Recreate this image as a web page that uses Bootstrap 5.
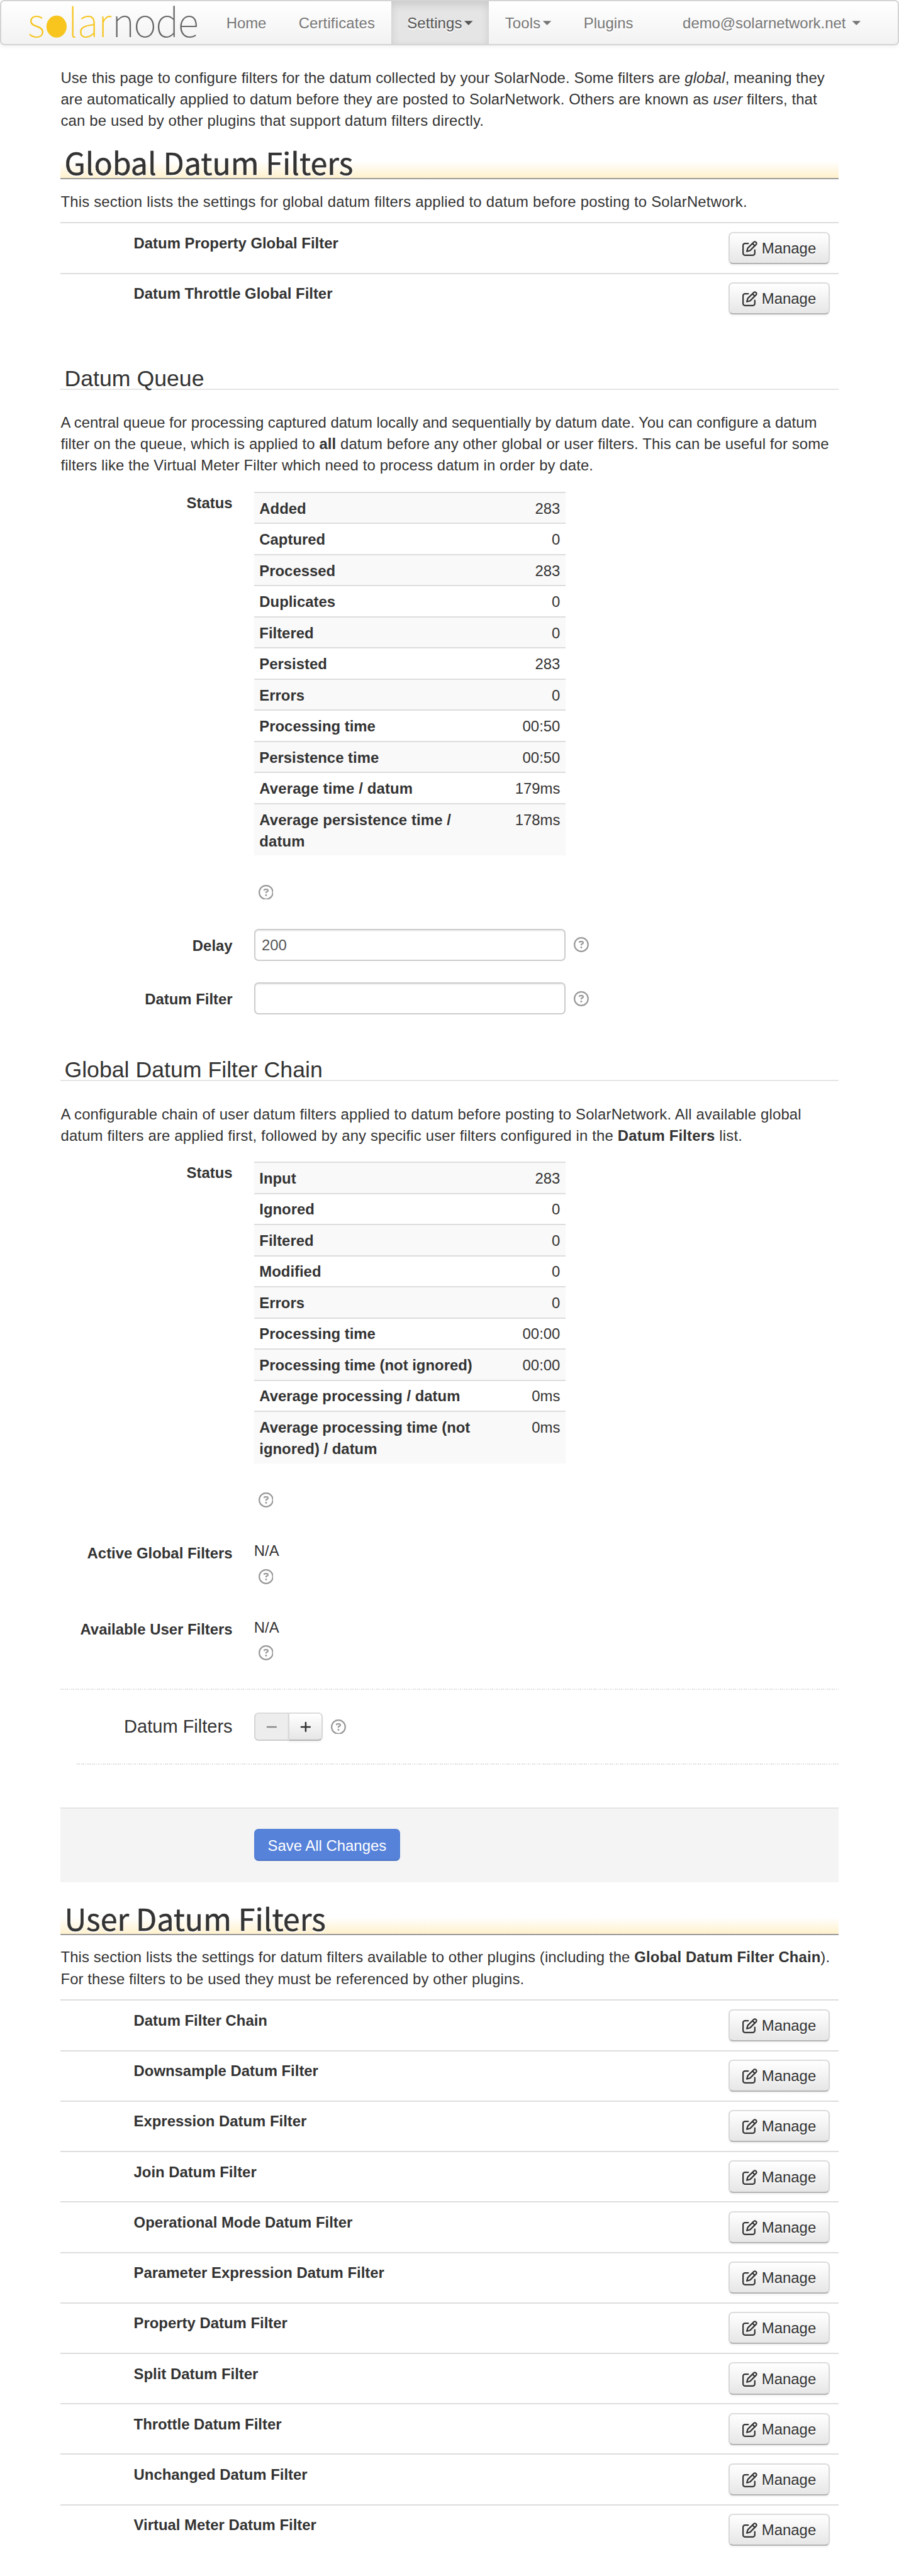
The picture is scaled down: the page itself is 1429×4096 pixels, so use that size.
<!DOCTYPE html>
<html lang="en">
<head>
<meta charset="utf-8">
<title>SolarNode - Datum Filters</title>
<link href="https://cdn.jsdelivr.net/npm/bootstrap@5.3.0/dist/css/bootstrap.min.css" rel="stylesheet">
<style>
/* 0.1rem is one layout unit */
html{font-size:17.0733px;overflow:hidden}
body{font-family:"Liberation Sans",Arial,sans-serif;font-size:1.4rem;line-height:2rem;color:#333;background:#fff;-webkit-text-size-adjust:none}
.topbar{height:4.2rem;border:2px solid #d4d4d4;border-radius:.4rem;background:linear-gradient(#fff,#f2f2f2);box-shadow:0 .1rem .4rem rgba(0,0,0,.065);padding:0}
.brand-svg{width:19.45rem;height:4rem;flex:none;display:block;overflow:visible}
.topbar .nav-link{padding:.1rem 1.5rem 0;height:100%;display:flex;align-items:center;color:#777;text-shadow:0 .1rem 0 #fff;white-space:nowrap}
.topbar .nav-link.active{color:#555;background:#e5e5e5;box-shadow:inset 0 .3rem .8rem rgba(0,0,0,.125)}
.topbar .user-link{margin-right:1.95rem}
.tri{width:.8rem;height:.4rem;background:currentColor;clip-path:polygon(0 0,100% 0,50% 100%);margin-left:.2rem;margin-top:0}
.page-body{width:72.4rem;margin:2rem auto 0}
p{margin:0 0 .92rem;padding-top:.08rem;white-space:nowrap}
.w1{letter-spacing:.09px}.w2{letter-spacing:.11px}.w3{letter-spacing:.16px}.w4{letter-spacing:.2px}
h2.sect{font-family:"Noto Sans CJK SC",sans-serif;font-weight:400;-webkit-text-stroke:.5px #333;font-size:2.83rem;line-height:3.76rem;height:3.5rem;margin:0 0 1rem;padding-left:.35rem;border-bottom:2px solid #999;background:linear-gradient(rgba(255,240,200,0) 54%,#fff1cc) no-repeat;text-shadow:0 .1rem .1rem #fff,0 0 .2rem #fff;white-space:nowrap}
h3.legend-line{font-size:2.09rem;font-weight:400;line-height:6.1rem;height:4.1rem;margin:2.1rem 0 2rem;padding:0 0 0 .35rem;border-bottom:2px solid #e5e5e5}
h3.legend-line.second{margin-top:.1rem}
.item-row{height:4.7rem;border-top:2px solid #ddd;padding:.86rem .8rem 0 6.8rem;font-weight:700}
.item-row .btn-soft{margin-top:-.08rem}
.btn-soft{height:3rem;width:9.4rem;padding:.08rem 0 0;border:2px solid;border-color:#dcdcdc #d8d8d8 #b3b3b3;border-radius:.4rem;background:linear-gradient(#fff,#e6e6e6);box-shadow:0 .1rem .2rem rgba(0,0,0,.06);font-size:1.4rem;line-height:2rem;color:#333;text-shadow:0 .1rem .1rem rgba(255,255,255,.75);gap:.4rem;display:flex;align-items:center;justify-content:center}
.ico{width:1.4rem;height:1.4rem;fill:currentColor;flex:none}
.help{color:#999;display:block}
.beside{margin-left:.78rem}
.lab{width:16rem;margin-right:2rem;padding-top:.58rem;text-align:right;font-weight:700;flex:none;white-space:nowrap}
.stat{width:29rem;margin-top:.5rem}
.stat>div{height:2.9rem;border-top:2px solid #ddd;padding:.46rem .5rem 0;display:flex;justify-content:space-between}
.stat>div:nth-child(odd){background:#f9f9f9}
.stat>div.two{height:4.9rem}
.stat b{white-space:nowrap}
.below{margin:2.7rem 0 0 .4rem}
.na{padding-top:.38rem}
.na .help{margin:.68rem 0 0 .4rem}
.inp{width:29rem;height:3rem;border:2px solid #ccc;border-radius:.4rem;box-shadow:inset 0 .1rem .1rem rgba(0,0,0,.075);padding:.1rem .6rem 0;color:#555;font-size:1.4rem;line-height:2rem}
.dot-line{height:2px;background:repeating-linear-gradient(90deg,#dedede 0 1.7073px,#fff 1.7073px 3.4147px)}
.pm{width:3.2rem;height:2.6rem;padding:0;border-radius:0 .4rem .4rem 0}
.pm.off{background:#ededed;border-color:#dcdcdc #d4d4d4 #ccc;border-right:0;border-radius:.4rem 0 0 .4rem;color:#8a8a8a;box-shadow:none}
.acts{height:7rem;border-top:2px solid #e5e5e5;background:#f4f4f4;padding:1.9rem 0 0 18rem;margin-bottom:1.4rem}
.btn-save{width:13.6rem;height:3rem;padding:.1rem 0 0;border:2px solid;border-color:#5480d6 #5480d6 #4a73c4;border-radius:.4rem;background:#5682da;color:#fff;font-size:1.4rem;line-height:1}
</style>
</head>
<body>
<svg class="d-none">
<symbol id="edit" viewBox="0 0 512 512"><path d="M441 58.9L453.1 71c9.4 9.4 9.4 24.6 0 33.9L424 134.1 377.9 88 407 58.9c9.4-9.4 24.6-9.4 33.9 0zM209.8 256.2L344 121.9 390.1 168 255.8 302.2c-2.9 2.9-6.5 5-10.4 6.1l-58.5 16.7 16.7-58.5c1.1-3.9 3.2-7.5 6.1-10.4zM373.1 25L175.8 222.2c-8.7 8.7-15 19.4-18.3 31.1l-28.6 100c-2.4 8.4-.1 17.4 6.1 23.6s15.2 8.5 23.6 6.1l100-28.6c11.8-3.4 22.5-9.7 31.1-18.3L487 138.9c28.1-28.1 28.1-73.7 0-101.8L474.9 25C446.8-3.1 401.2-3.1 373.1 25zM88 64C39.4 64 0 103.4 0 152V424c0 48.6 39.4 88 88 88H360c48.6 0 88-39.4 88-88V312c0-13.3-10.7-24-24-24s-24 10.7-24 24V424c0 22.1-17.9 40-40 40H88c-22.1 0-40-17.9-40-40V152c0-22.1 17.9-40 40-40H200c13.3 0 24-10.7 24-24s-10.7-24-24-24H88z"/></symbol>
<symbol id="ask" viewBox="0 0 512 512"><path d="M464 256A208 208 0 1 0 48 256a208 208 0 1 0 416 0zM0 256a256 256 0 1 1 512 0A256 256 0 1 1 0 256zm169.8-90.7c7.9-22.3 29.1-37.3 52.8-37.3h58.3c34.9 0 63.1 28.3 63.1 63.1c0 22.6-12.1 43.5-31.7 54.8L280 264.4c-.2 13-10.9 23.6-24 23.6c-13.3 0-24-10.7-24-24V250.5c0-8.6 4.6-16.5 12.1-20.8l44.3-25.4c4.7-2.7 7.6-7.7 7.6-13.1c0-8.4-6.8-15.1-15.1-15.1H222.6c-3.4 0-6.4 2.1-7.5 5.3l-.4 1.2c-4.4 12.5-18.2 19-30.6 14.6s-19-18.2-14.6-30.6l.4-1.2zM224 352a32 32 0 1 1 64 0 32 32 0 1 1 -64 0z"/></symbol>
</svg>

<nav class="topbar d-flex">
  <svg class="brand-svg" viewBox="1.17 1.17 194.5 40" font-family="'Noto Sans CJK SC'" font-weight="100" font-size="36.5">
    <ellipse cx="52.65" cy="24.75" rx="9.4" ry="10.25" fill="#f7c51e"/>
    <text y="34.3" x="25.7 63.2 72.1 91.4" fill="#f7c51e">slar</text>
    <text y="34.3" x="104.3 124.3 144.9 165.6" fill="#666">node</text>
  </svg>
  <div class="nav flex-nowrap h-100 flex-grow-1">
    <a class="nav-link" href="#">Home</a>
    <a class="nav-link w3" href="#">Certificates</a>
    <a class="nav-link w2 active" href="#">Settings<i class="tri"></i></a>
    <a class="nav-link w3" href="#">Tools<i class="tri"></i></a>
    <a class="nav-link w1" href="#">Plugins</a>
    <a class="nav-link user-link ms-auto" href="#">demo@solarnetwork.net&nbsp;<i class="tri"></i></a>
  </div>
</nav>

<main class="page-body">
  <p><span class="w2">Use this page to configure filters for the datum collected by your SolarNode. Some filters are <em>global</em>, meaning they</span><br><span class="w2">are automatically applied to datum before they are posted to SolarNetwork. Others are known as <em>user</em> filters, that</span><br><span class="w3">can be used by other plugins that support datum filters directly.</span></p>
  <h2 class="sect">Global Datum Filters</h2>
  <p class="w4">This section lists the settings for global datum filters applied to datum before posting to SolarNetwork.</p>
  <div class="item-row d-flex justify-content-between">Datum Property Global Filter<a class="btn btn-soft"><svg class="ico"><use href="#edit"/></svg>Manage</a></div>
  <div class="item-row d-flex justify-content-between">Datum Throttle Global Filter<a class="btn btn-soft"><svg class="ico"><use href="#edit"/></svg>Manage</a></div>

  <h3 class="legend-line">Datum Queue</h3>
  <p><span>A central queue for processing captured datum locally and sequentially by datum date. You can configure a datum</span><br><span class="w2">filter on the queue, which is applied to <b>all</b> datum before any other global or user filters. This can be useful for some</span><br><span class="w2">filters like the Virtual Meter Filter which need to process datum in order by date.</span></p>
  <div class="d-flex" style="height:41.2rem">
    <div class="lab">Status</div>
    <div>
      <div class="stat">
        <div><b>Added</b><span>283</span></div>
        <div><b>Captured</b><span>0</span></div>
        <div><b>Processed</b><span>283</span></div>
        <div><b>Duplicates</b><span>0</span></div>
        <div><b>Filtered</b><span>0</span></div>
        <div><b>Persisted</b><span>283</span></div>
        <div><b>Errors</b><span>0</span></div>
        <div><b>Processing time</b><span>00:50</span></div>
        <div><b>Persistence time</b><span>00:50</span></div>
        <div><b class="w3">Average time / datum</b><span>179ms</span></div>
        <div class="two"><b class="w2">Average persistence time /<br>datum</b><span>178ms</span></div>
      </div>
      <svg class="ico help below"><use href="#ask"/></svg>
    </div>
  </div>
  <div class="d-flex" style="height:5rem">
    <label class="lab">Delay</label>
    <input class="inp" value="200"><svg class="ico help beside" style="margin-top:.8rem"><use href="#ask"/></svg>
  </div>
  <div class="d-flex" style="height:5rem">
    <label class="lab">Datum Filter</label>
    <input class="inp" value=""><svg class="ico help beside" style="margin-top:.8rem"><use href="#ask"/></svg>
  </div>

  <h3 class="legend-line second">Global Datum Filter Chain</h3>
  <p class="w3">A configurable chain of user datum filters applied to datum before posting to SolarNetwork. All available global<br>datum filters are applied first, followed by any specific user filters configured in the <b>Datum Filters</b> list.</p>
  <div class="d-flex" style="height:35.4rem">
    <div class="lab">Status</div>
    <div>
      <div class="stat">
        <div><b>Input</b><span>283</span></div>
        <div><b>Ignored</b><span>0</span></div>
        <div><b>Filtered</b><span>0</span></div>
        <div><b>Modified</b><span>0</span></div>
        <div><b>Errors</b><span>0</span></div>
        <div><b>Processing time</b><span>00:00</span></div>
        <div><b>Processing time (not ignored)</b><span>00:00</span></div>
        <div><b>Average processing / datum</b><span>0ms</span></div>
        <div class="two"><b>Average processing time (not<br>ignored) / datum</b><span>0ms</span></div>
      </div>
      <svg class="ico help below"><use href="#ask"/></svg>
    </div>
  </div>
  <div class="d-flex" style="height:7.1rem">
    <div class="lab">Active Global Filters</div>
    <div class="na">N/A<svg class="ico help"><use href="#ask"/></svg></div>
  </div>
  <div class="d-flex" style="height:7.1rem">
    <div class="lab">Available User Filters</div>
    <div class="na">N/A<svg class="ico help"><use href="#ask"/></svg></div>
  </div>
  <div class="dot-line"></div>
  <div class="d-flex align-items-center" style="height:6.8rem">
    <div class="lab fw-normal pt-0" style="font-size:1.7rem">Datum Filters</div>
    <div class="d-flex">
      <a class="btn btn-soft pm off"><svg class="ico" viewBox="0 0 14 14" fill="none" stroke="currentColor" stroke-width="1.5" stroke-linecap="round"><path d="M2.9 7h8.1"/></svg></a>
      <a class="btn btn-soft pm"><svg class="ico" viewBox="0 0 14 14" fill="none" stroke="currentColor" stroke-width="1.5" stroke-linecap="round"><path d="M2.9 7h8.1M7 2.9v8.1"/></svg></a>
    </div>
    <svg class="ico help beside"><use href="#ask"/></svg>
  </div>
  <div class="dot-line" style="margin:0 0 4rem 1.5rem"></div>

  <div class="acts"><button class="btn btn-save">Save All Changes</button></div>

  <h2 class="sect">User Datum Filters</h2>
  <p class="w2">This section lists the settings for datum filters available to other plugins (including the <b>Global Datum Filter Chain</b>).<br>For these filters to be used they must be referenced by other plugins.</p>
  <div class="item-row d-flex justify-content-between">Datum Filter Chain<a class="btn btn-soft"><svg class="ico"><use href="#edit"/></svg>Manage</a></div>
  <div class="item-row d-flex justify-content-between">Downsample Datum Filter<a class="btn btn-soft"><svg class="ico"><use href="#edit"/></svg>Manage</a></div>
  <div class="item-row d-flex justify-content-between">Expression Datum Filter<a class="btn btn-soft"><svg class="ico"><use href="#edit"/></svg>Manage</a></div>
  <div class="item-row d-flex justify-content-between">Join Datum Filter<a class="btn btn-soft"><svg class="ico"><use href="#edit"/></svg>Manage</a></div>
  <div class="item-row d-flex justify-content-between">Operational Mode Datum Filter<a class="btn btn-soft"><svg class="ico"><use href="#edit"/></svg>Manage</a></div>
  <div class="item-row d-flex justify-content-between">Parameter Expression Datum Filter<a class="btn btn-soft"><svg class="ico"><use href="#edit"/></svg>Manage</a></div>
  <div class="item-row d-flex justify-content-between">Property Datum Filter<a class="btn btn-soft"><svg class="ico"><use href="#edit"/></svg>Manage</a></div>
  <div class="item-row d-flex justify-content-between">Split Datum Filter<a class="btn btn-soft"><svg class="ico"><use href="#edit"/></svg>Manage</a></div>
  <div class="item-row d-flex justify-content-between">Throttle Datum Filter<a class="btn btn-soft"><svg class="ico"><use href="#edit"/></svg>Manage</a></div>
  <div class="item-row d-flex justify-content-between">Unchanged Datum Filter<a class="btn btn-soft"><svg class="ico"><use href="#edit"/></svg>Manage</a></div>
  <div class="item-row d-flex justify-content-between">Virtual Meter Datum Filter<a class="btn btn-soft"><svg class="ico"><use href="#edit"/></svg>Manage</a></div>
</main>
<script src="https://cdn.jsdelivr.net/npm/bootstrap@5.3.0/dist/js/bootstrap.bundle.min.js"></script>
</body>
</html>
